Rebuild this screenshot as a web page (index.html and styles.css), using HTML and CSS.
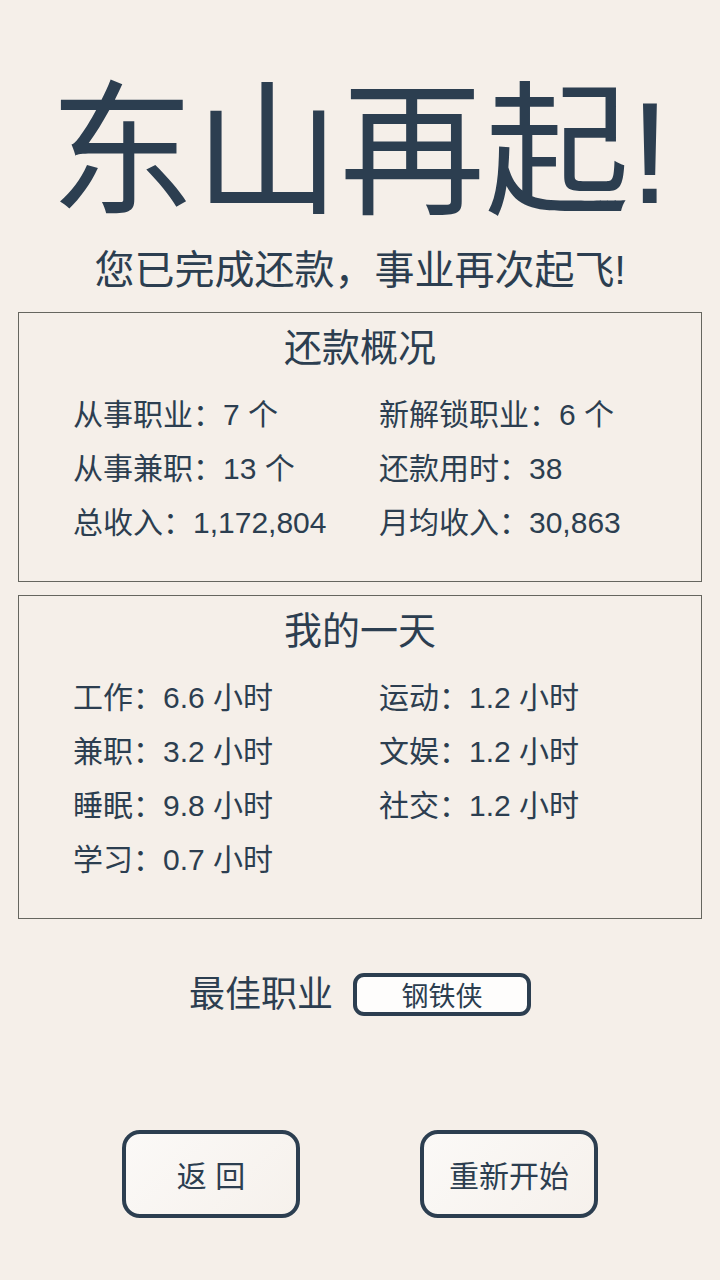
FILE: index.html
```html
<!DOCTYPE html>
<html lang="zh-CN">
<head>
    <meta charset="UTF-8">
    <meta name="viewport" content="width=device-width, initial-scale=1.0">
    <title>东山再起</title>
    <link rel="stylesheet" href="styles.css">
</head>
<body>

<main class="page">
    <h1 class="title">东山再起!</h1>
    <p class="subtitle">您已完成还款，事业再次起飞!</p>

    <!-- 还款概况 -->
    <section class="card">
        <h2 class="card-title">还款概况</h2>
        <div class="stats">
            <span>从事职业：7 个</span>
            <span>新解锁职业：6 个</span>
            <span>从事兼职：13 个</span>
            <span>还款用时：38</span>
            <span>总收入：1,172,804</span>
            <span>月均收入：30,863</span>
        </div>
    </section>

    <!-- 我的一天 -->
    <section class="card">
        <h2 class="card-title">我的一天</h2>
        <div class="stats">
            <span>工作：6.6 小时</span>
            <span>运动：1.2 小时</span>
            <span>兼职：3.2 小时</span>
            <span>文娱：1.2 小时</span>
            <span>睡眠：9.8 小时</span>
            <span>社交：1.2 小时</span>
            <span>学习：0.7 小时</span>
        </div>
    </section>

    <div class="best">
        <span class="best-label">最佳职业</span>
        <span class="best-job">钢铁侠</span>
    </div>

    <div class="actions">
        <button class="btn">返 回</button>
        <button class="btn">重新开始</button>
    </div>
</main>

</body>
</html>
```

FILE: styles.css
```css
body {
    margin: 0;
    padding: 0;
    background: #f5efe9;
    color: #2c3e50;
    font-family: "Liberation Sans", "Noto Sans CJK SC", sans-serif;
}

.page {
    display: flex;
    flex-direction: column;
    padding: 0 18px;
}

.title {
    margin: 75px 0 0;
    font-size: 145px;
    font-weight: 400;
    line-height: 157px;
    text-align: center;
}

.subtitle {
    margin: 14px 0 18px;
    font-size: 40px;
    line-height: 48px;
    text-align: center;
}

/* Cartes de stats */
.card {
    border: 1px solid #66665f;
    padding: 13px 0 34px 54px;
    margin-bottom: 13px;
}
.card-title {
    margin: 0 0 15px -54px;
    font-size: 38px;
    font-weight: 400;
    line-height: 44px;
    text-align: center;
}
.stats {
    display: grid;
    grid-template-columns: 306px 1fr;
    grid-auto-rows: 54px;
    align-items: center;
    font-size: 30px;
}

/* Meilleur métier */
.best {
    display: flex;
    justify-content: center;
    align-items: center;
    gap: 20px;
    margin-top: 41px;
}
.best-label {
    font-size: 36px;
    line-height: 1;
}
.best-job {
    width: 170px;
    height: 35px;
    border: 4px solid #2c3e50;
    border-radius: 11px;
    background: #fefdfc;
    display: flex;
    align-items: center;
    justify-content: center;
    font-size: 27px;
}

.actions {
    display: flex;
    justify-content: center;
    gap: 120px;
    margin-top: 114px;
}
.btn {
    width: 178px;
    height: 88px;
    border: 4px solid #2c3e50;
    border-radius: 18px;
    background: linear-gradient(135deg, #fbf9f7, #f6f1ec);
    color: #2c3e50;
    font-family: inherit;
    font-size: 30px;
    cursor: pointer;
}
```
